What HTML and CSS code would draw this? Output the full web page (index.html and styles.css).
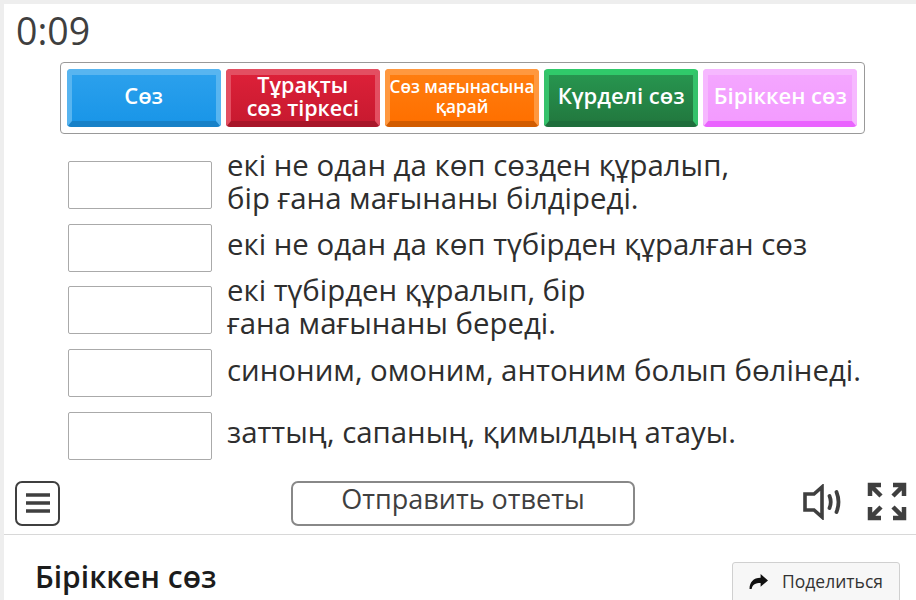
FILE: index.html
```html
<!DOCTYPE html>
<html lang="kk">
<head>
<meta charset="utf-8">
<title>Біріккен сөз</title>
<link rel="stylesheet" href="styles.css">
</head>
<body>
<main class="card">
  <section class="game">
    <div class="timer">0:09</div>
    <div class="tray">
      <div class="tile blue"><span>Сөз</span></div>
      <div class="tile red mid"><span>Тұрақты<br>сөз тіркесі</span></div>
      <div class="tile orange small"><span>Сөз мағынасына<br>қарай</span></div>
      <div class="tile green"><span>Күрделі сөз</span></div>
      <div class="tile pink"><span>Біріккен сөз</span></div>
    </div>
    <div class="rows">
      <div class="row"><div class="slot"></div><p>екі не одан да көп сөзден құралып,<br>бір ғана мағынаны білдіреді.</p></div>
      <div class="row"><div class="slot"></div><p>екі не одан да көп түбірден құралған сөз</p></div>
      <div class="row"><div class="slot"></div><p>екі түбірден құралып, бір<br>ғана мағынаны береді.</p></div>
      <div class="row"><div class="slot"></div><p>синоним, омоним, антоним болып бөлінеді.</p></div>
      <div class="row"><div class="slot"></div><p>заттың, сапаның, қимылдың атауы.</p></div>
    </div>
    <div class="controls">
      <button class="menu" aria-label="Меню">
        <svg width="24" height="22" viewBox="0 0 24 22"><path d="M0 3h24M0 11h24M0 19h24" stroke="#3f3f3f" stroke-width="3.500"/></svg>
      </button>
      <button class="submit">Отправить ответы</button>
      <div class="tools">
        <svg class="sound" width="41" height="36" viewBox="0 0 41 36" fill="none" stroke="#3f3f3f"><path d="M2 10h9L19 3v30l-8-7H2z" stroke-width="3.600"/><path d="M26.500 12q2.500 6 0 12M33.500 8q4 10 0 20" stroke-width="3.800" stroke-linecap="round"/></svg>
        <svg class="full" width="40" height="40" viewBox="0 0 40 40" fill="none" stroke="#3f3f3f" stroke-width="4.500">
          <path d="M3 14V3h11M3 3l11 11"/>
          <path d="M37 14V3H26M37 3L26 14"/>
          <path d="M3 25v11h11M3 36l11-11"/>
          <path d="M37 25v11H26M37 36L26 25"/>
        </svg>
      </div>
    </div>
  </section>
  <section class="info">
    <h1>Біріккен сөз</h1>
    <button class="share">
      <svg width="19" height="15" viewBox="0 0 18 14"><path d="M11 0l7 6-7 6V8.500C6 8.500 3.500 10 2.500 14H.5C.5 8 4 3.500 11 3.500z" fill="#111"/></svg>
      Поделиться
    </button>
  </section>
</main>
</body>
</html>
```
FILE: styles.css
```css
* { box-sizing: border-box; }
html, body { height: 100%; }
body {
  margin: 0;
  padding: 4px 0 0 4px;
  background: #eeeeee;
  font-family: "Open Sans", "Noto Sans", sans-serif;
  overflow: hidden;
}
.card { background: #fff; height: 596px; overflow: hidden; }
.game { height: 531px; border-bottom: 1px solid #d8d8d8; padding: 0 0 0 11px; }
.timer { height: 58px; padding-top: 5px; font-size: 37.500px; font-weight: 500; line-height: 44px; color: #3f3f3f; margin-left: 1px; }
.tray {
  width: 805px; height: 72px; margin-left: 45px;
  display: flex; gap: 5px; padding: 6px 6px 6px 5.500px;
  border: 1px solid #999; border-radius: 4px;
}
.tile {
  width: 154.200px; height: 58px; border-radius: 4px;
  border-style: solid; border-width: 6px 5px;
  display: flex; align-items: center; justify-content: center; text-align: center;
  color: #fff; font-weight: 600; font-size: 22px; line-height: 23px;
  padding-bottom: 5px;
}
.tile span { white-space: nowrap; }
.mid { font-size: 21.500px; }
.small { font-size: 17.200px; line-height: 20px; padding-bottom: 3px; }
.blue { background: linear-gradient(#2ba0ec, #1a96e8); border-color: #58b5f0 #58b5f0 #1781c8; }
.red { background: linear-gradient(#dc2038, #c81a30); border-color: #e34f62 #e34f62 #a81629; }
.orange { background: linear-gradient(#ff7d0f, #ff7000); border-color: #ff983f #ff983f #d25c00; }
.green { background: linear-gradient(#27954f, #22793f); border-color: #30ca6a #35c26b #1f6e3c; }
.pink { background: linear-gradient(#f4a6ff, #f39bff); border-color: #f6b8ff #f6b8ff #ea63ff; }
.rows { display: flex; flex-direction: column; gap: 14.750px; margin-top: 26.900px; margin-left: 53px; }
.row { display: flex; align-items: center; height: 48px; gap: 15px; }
.slot { width: 144px; height: 48px; flex: none; border: 1px solid #aaa; border-radius: 2px; background: #fff; }
.row p { margin: -6px 0 0; font-size: 29.400px; line-height: 33px; color: #2e2e2e; white-space: nowrap; }
.controls { display: flex; align-items: center; height: 45px; margin-top: 21.100px; }
.menu { width: 45px; height: 45px; padding: 0; border: 2px solid #3f3f3f; border-radius: 7px; background: #fff; display: flex; align-items: center; justify-content: center; }
.submit { width: 344px; height: 45px; margin-left: 231px; padding: 0 0 8px; border: 2px solid #888; border-radius: 7px; background: #fff; font: 500 27px/30px "Open Sans", sans-serif; color: #3f3f3f; }
.tools { display: flex; align-items: center; gap: 23px; margin-left: 168px; margin-top: -2px; }
.info { display: flex; justify-content: space-between; align-items: flex-start; padding: 27px 16px 0 31px; }
h1 { margin: -3px 0 0; font-size: 30px; line-height: 36px; font-weight: 600; color: #1c1c1c; }
.share {
  width: 168px; height: 46px; display: flex; align-items: center; justify-content: center; gap: 14px; padding: 0 0 8px;
  background: #f7f7f7; border: 1px solid #d0d0d0; border-radius: 3px;
  font: 400 17.500px "Open Sans", sans-serif; color: #333;
}
```
